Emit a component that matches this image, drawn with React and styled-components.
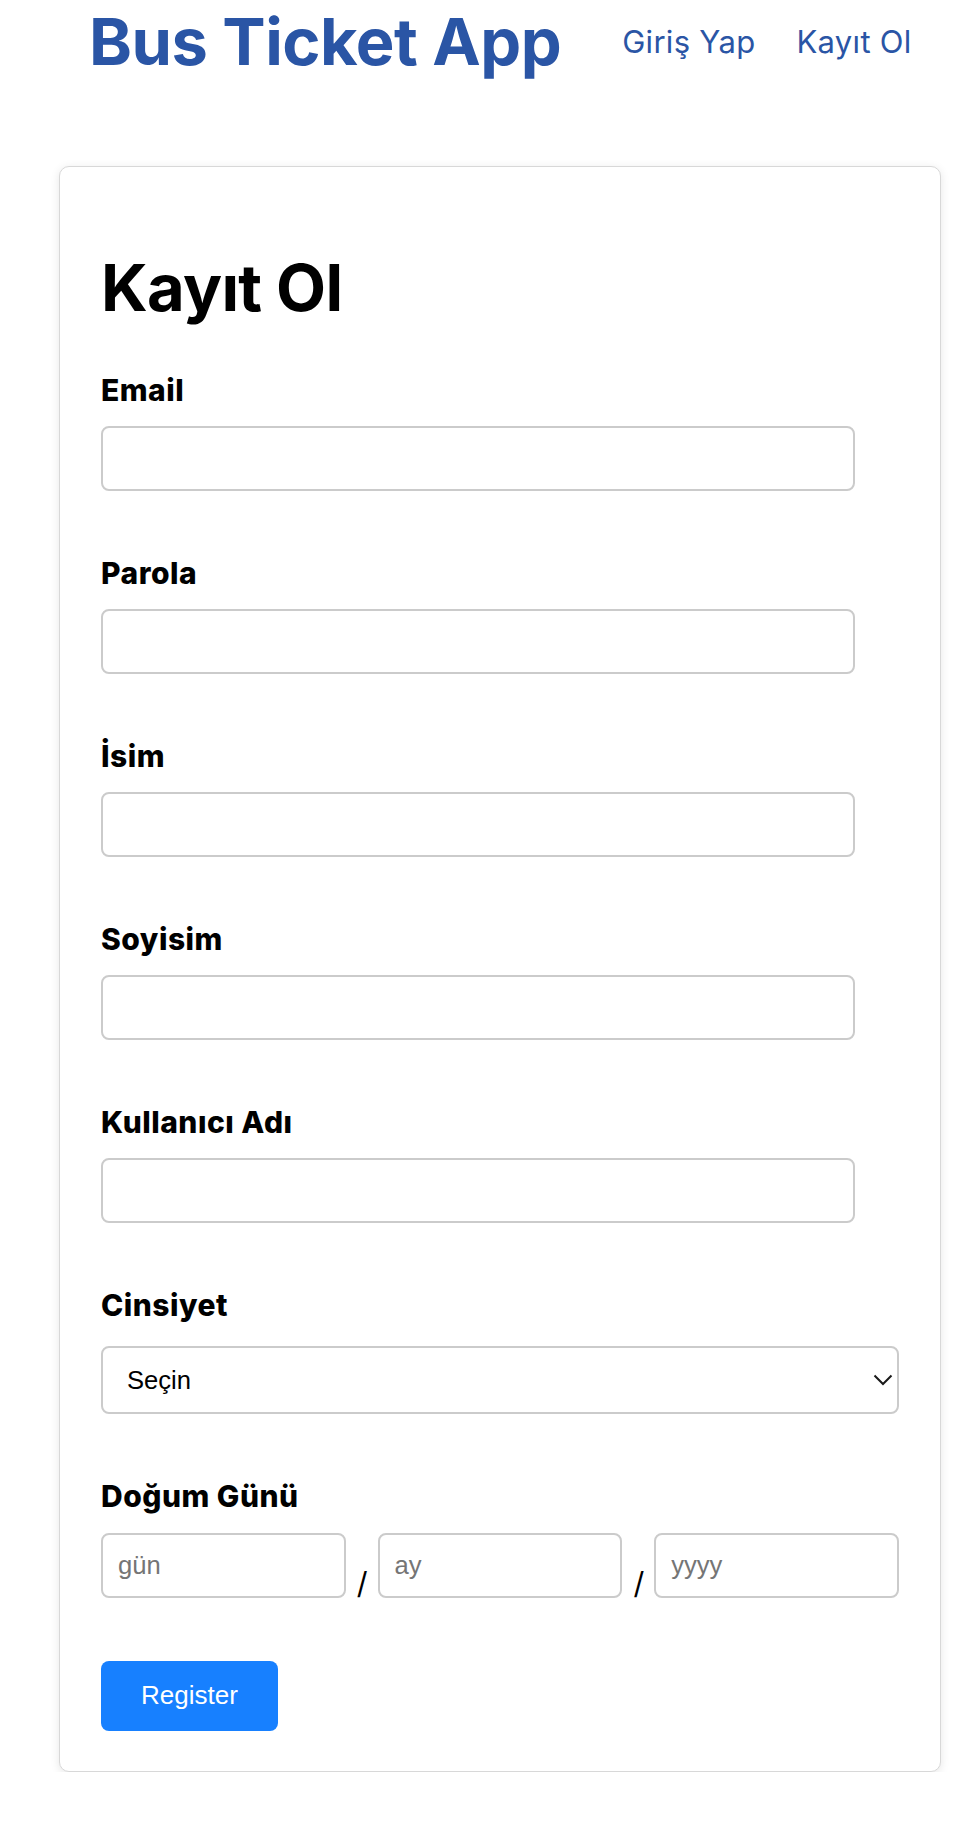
import React from 'react'
import styled, { createGlobalStyle } from 'styled-components'

const GlobalStyle = createGlobalStyle`
  * { box-sizing: border-box; }
  body {
    margin: 0;
    background: #fff;
    font-family: Inter, "Noto Sans", sans-serif;
  }
`

const Header = styled.header`
  display: flex;
  align-items: center;
  padding: 3px 0 0 89px;
`

const Brand = styled.h1`
  margin: 0;
  font-size: 65px;
  line-height: 78px;
  font-weight: 700;
  letter-spacing: -0.5px;
  color: #2a55a5;
`

const Nav = styled.nav`
  display: flex;
  gap: 41px;
  margin-left: 61px;
`

const NavLink = styled.a`
  font-size: 31px;
  line-height: 1.2;
  letter-spacing: 0.3px;
  color: #2a55a5;
  text-decoration: none;
`

const Card = styled.main`
  width: 882px;
  margin: 85px 0 0 59px;
  padding: 82px 41px 40px;
  border: 1px solid #d8d8d8;
  border-radius: 10px;
  box-shadow: 0 2px 10px rgba(0, 0, 0, 0.1);
  background: #fff;
`

const Title = styled.h2`
  margin: 0 0 46px;
  font-size: 65px;
  line-height: 78px;
  font-weight: 700;
  letter-spacing: -0.7px;
  color: #000;
`

const Field = styled.div`
  display: flex;
  flex-direction: column;
  margin-bottom: ${p => p.$last ? '63px' : '65.5px'};
`

const Label = styled.label`
  font-size: 30px;
  line-height: 34.5px;
  font-weight: 800;
  letter-spacing: 0.5px;
  color: #000;
  margin-bottom: ${p => p.$gap || 18}px;
`

const TextInput = styled.input`
  display: block;
  width: ${p => p.$grow ? 'auto' : 'calc(100% - 44px)'};
  flex: ${p => p.$grow ? '1 1 0' : 'none'};
  min-width: 0;
  height: 65px;
  padding: 0 15px;
  border: 2px solid #cbcbcb;
  border-radius: 8px;
  font: 25.6px "Liberation Sans", Arial, sans-serif;
  color: #000;
  background: #fff;
  outline: none;

  &::placeholder {
    color: #757575;
  }
`

const SelectWrap = styled.div`
  position: relative;
`

const Select = styled.select`
  appearance: none;
  display: block;
  width: 100%;
  height: 68px;
  padding: 0 24px;
  border: 2px solid #cbcbcb;
  border-radius: 8px;
  font: 25.6px "Liberation Sans", Arial, sans-serif;
  color: #000;
  background: #fff;
  outline: none;
`

const Chevron = styled.svg`
  position: absolute;
  right: 6px;
  top: 50%;
  transform: translateY(-50%);
  pointer-events: none;
`

const DateRow = styled.div`
  display: flex;
  align-items: flex-end;
`

const Slash = styled.span`
  font-size: 30px;
  line-height: 1;
  color: #000;
  margin: 0 10px 0 11px;
`

const Button = styled.button`
  align-self: flex-start;
  height: 70px;
  padding: 0 40px;
  border: none;
  border-radius: 8px;
  background: #1780ff;
  color: #fff;
  font: 26px "Liberation Sans", Arial, sans-serif;
  cursor: pointer;
`

const Form = styled.form`
  display: flex;
  flex-direction: column;
`

const textFields = ['Email', 'Parola', 'İsim', 'Soyisim', 'Kullanıcı Adı']

export default function App() {
  return (
    <>
      <GlobalStyle />
      <Header>
        <Brand>Bus Ticket App</Brand>
        <Nav>
          <NavLink href="#">Giriş Yap</NavLink>
          <NavLink href="#">Kayıt Ol</NavLink>
        </Nav>
      </Header>
      <Card>
        <Title>Kayıt Ol</Title>
        <Form onSubmit={e => e.preventDefault()}>
          {textFields.map(name => (
            <Field key={name}>
              <Label>{name}</Label>
              <TextInput type={name === 'Parola' ? 'password' : 'text'} />
            </Field>
          ))}
          <Field>
            <Label $gap={23}>Cinsiyet</Label>
            <SelectWrap>
              <Select defaultValue="">
                <option value="">Seçin</option>
                <option value="e">Erkek</option>
                <option value="k">Kadın</option>
              </Select>
              <Chevron width="20" height="12" viewBox="0 0 20 12">
                <path d="M1.5 1.5 L10 10 L18.5 1.5" fill="none" stroke="#1a1a1a" strokeWidth="2" />
              </Chevron>
            </SelectWrap>
          </Field>
          <Field $last>
            <Label $gap={19}>Doğum Günü</Label>
            <DateRow>
              <TextInput $grow placeholder="gün" />
              <Slash>/</Slash>
              <TextInput $grow placeholder="ay" />
              <Slash>/</Slash>
              <TextInput $grow placeholder="yyyy" />
            </DateRow>
          </Field>
          <Button type="submit">Register</Button>
        </Form>
      </Card>
    </>
  )
}
